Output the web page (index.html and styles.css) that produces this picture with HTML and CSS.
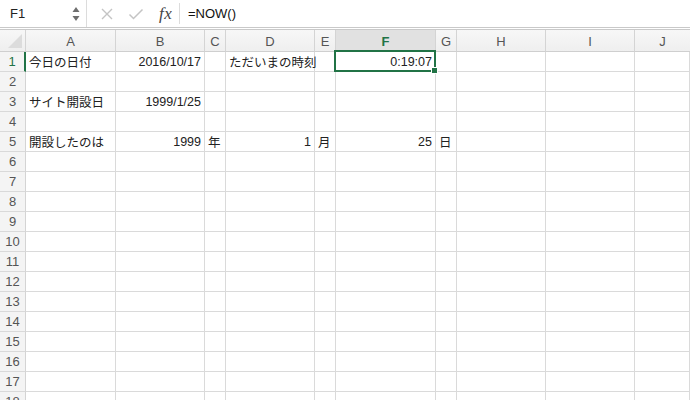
FILE: index.html
```html
<!DOCTYPE html>
<html lang="ja">
<head>
<meta charset="utf-8">
<link rel="stylesheet" href="styles.css">
</head>
<body>
<div class="app">
  <div class="fbar">
    <div class="namebox">
      <span class="name">F1</span>
      <svg class="spin" width="8" height="18" viewBox="0 0 8 18"><path d="M4 2 L7.5 7 L0.5 7 Z" fill="#6e6e6e"/><path d="M0.5 11 L7.5 11 L4 16 Z" fill="#6e6e6e"/></svg>
    </div>
    <div class="tools">
      <svg class="ico" width="14" height="14" viewBox="0 0 14 14"><path d="M2 2 L12 12 M12 2 L2 12" stroke="#c4c4c4" stroke-width="1.4" fill="none"/></svg>
      <svg class="ico" width="16" height="14" viewBox="0 0 16 14"><path d="M1.5 7.5 L5.5 11.5 L14.5 2.5" stroke="#c4c4c4" stroke-width="1.5" fill="none"/></svg>
      <span class="fx">fx</span>
    </div>
    <div class="formula">=NOW()</div>
  </div>
  <div class="sep"></div>
  <div class="sheet">
    <div class="corner"><svg width="14" height="14" viewBox="0 0 14 14"><path d="M14 0 L14 14 L0 14 Z" fill="#dcdcdc"/></svg></div>
    <div class="ch">A</div><div class="ch">B</div><div class="ch">C</div><div class="ch">D</div><div class="ch">E</div><div class="ch sel">F</div><div class="ch">G</div><div class="ch">H</div><div class="ch">I</div><div class="ch last">J</div>

    <div class="rh selr">1</div><div class="c">今日の日付</div><div class="c r">2016/10/17</div><div class="c"></div><div class="c">ただいまの時刻</div><div class="c"></div><div class="c r active">0:19:07</div><div class="c"></div><div class="c"></div><div class="c"></div><div class="c"></div>
    <div class="rh">2</div><div class="c"></div><div class="c"></div><div class="c"></div><div class="c"></div><div class="c"></div><div class="c"></div><div class="c"></div><div class="c"></div><div class="c"></div><div class="c"></div>
    <div class="rh">3</div><div class="c">サイト開設日</div><div class="c r">1999/1/25</div><div class="c"></div><div class="c"></div><div class="c"></div><div class="c"></div><div class="c"></div><div class="c"></div><div class="c"></div><div class="c"></div>
    <div class="rh">4</div><div class="c"></div><div class="c"></div><div class="c"></div><div class="c"></div><div class="c"></div><div class="c"></div><div class="c"></div><div class="c"></div><div class="c"></div><div class="c"></div>
    <div class="rh">5</div><div class="c">開設したのは</div><div class="c r">1999</div><div class="c">年</div><div class="c r">1</div><div class="c">月</div><div class="c r">25</div><div class="c">日</div><div class="c"></div><div class="c"></div><div class="c"></div>
    <div class="rh">6</div><div class="c"></div><div class="c"></div><div class="c"></div><div class="c"></div><div class="c"></div><div class="c"></div><div class="c"></div><div class="c"></div><div class="c"></div><div class="c"></div>
    <div class="rh">7</div><div class="c"></div><div class="c"></div><div class="c"></div><div class="c"></div><div class="c"></div><div class="c"></div><div class="c"></div><div class="c"></div><div class="c"></div><div class="c"></div>
    <div class="rh">8</div><div class="c"></div><div class="c"></div><div class="c"></div><div class="c"></div><div class="c"></div><div class="c"></div><div class="c"></div><div class="c"></div><div class="c"></div><div class="c"></div>
    <div class="rh">9</div><div class="c"></div><div class="c"></div><div class="c"></div><div class="c"></div><div class="c"></div><div class="c"></div><div class="c"></div><div class="c"></div><div class="c"></div><div class="c"></div>
    <div class="rh">10</div><div class="c"></div><div class="c"></div><div class="c"></div><div class="c"></div><div class="c"></div><div class="c"></div><div class="c"></div><div class="c"></div><div class="c"></div><div class="c"></div>
    <div class="rh">11</div><div class="c"></div><div class="c"></div><div class="c"></div><div class="c"></div><div class="c"></div><div class="c"></div><div class="c"></div><div class="c"></div><div class="c"></div><div class="c"></div>
    <div class="rh">12</div><div class="c"></div><div class="c"></div><div class="c"></div><div class="c"></div><div class="c"></div><div class="c"></div><div class="c"></div><div class="c"></div><div class="c"></div><div class="c"></div>
    <div class="rh">13</div><div class="c"></div><div class="c"></div><div class="c"></div><div class="c"></div><div class="c"></div><div class="c"></div><div class="c"></div><div class="c"></div><div class="c"></div><div class="c"></div>
    <div class="rh">14</div><div class="c"></div><div class="c"></div><div class="c"></div><div class="c"></div><div class="c"></div><div class="c"></div><div class="c"></div><div class="c"></div><div class="c"></div><div class="c"></div>
    <div class="rh">15</div><div class="c"></div><div class="c"></div><div class="c"></div><div class="c"></div><div class="c"></div><div class="c"></div><div class="c"></div><div class="c"></div><div class="c"></div><div class="c"></div>
    <div class="rh">16</div><div class="c"></div><div class="c"></div><div class="c"></div><div class="c"></div><div class="c"></div><div class="c"></div><div class="c"></div><div class="c"></div><div class="c"></div><div class="c"></div>
    <div class="rh">17</div><div class="c"></div><div class="c"></div><div class="c"></div><div class="c"></div><div class="c"></div><div class="c"></div><div class="c"></div><div class="c"></div><div class="c"></div><div class="c"></div>
    <div class="rh">18</div><div class="c"></div><div class="c"></div><div class="c"></div><div class="c"></div><div class="c"></div><div class="c"></div><div class="c"></div><div class="c"></div><div class="c"></div><div class="c"></div>
  </div>
</div>
</body>
</html>
```

FILE: styles.css
```css
* { box-sizing: border-box; }
html, body { margin: 0; padding: 0; background: #fff; overflow: hidden; }
body {
  font-family: "Liberation Sans", "Noto Sans CJK JP", sans-serif;
  font-size: 12.5px;
  color: #222;
  width: 690px;
  height: 400px;
}
.app { display: flex; flex-direction: column; }
.fbar {
  height: 28px;
  border-bottom: 1px solid #c9c9c9;
  display: flex;
  align-items: stretch;
}
.namebox {
  width: 87px;
  border-right: 1px solid #dcdcdc;
  display: flex;
  align-items: center;
  justify-content: space-between;
  padding: 0 6px 0 10px;
}
.name { font-size: 13px; color: #222; }
.spin { display: block; margin-top: 1px; }
.tools {
  display: flex;
  align-items: center;
  padding-left: 13px;
  width: 93px;
  border-right: 1px solid #dcdcdc;
  margin: 3px 0;
}
.tools .ico { display: block; margin-right: 14px; }
.tools .ico + .ico { margin-right: 15px; }
.fx {
  font-family: "Liberation Serif", serif;
  font-style: italic;
  font-size: 17px;
  color: #444;
  letter-spacing: 0.5px;
}
.formula {
  display: flex;
  align-items: center;
  padding-left: 8px;
  font-size: 13px;
  color: #111;
}
.sep { height: 2px; border-bottom: 1px solid #c9c9c9; }
.sheet {
  display: grid;
  grid-template-columns: 26px 90px 89px 21px 89px 21px 100px 21px 89px 89px 1fr;
  grid-auto-rows: 20px;
  grid-template-rows: 22px;
}
.corner, .ch {
  background: linear-gradient(#f7f7f7, #efefef);
  border-right: 1px solid #d4d4d4;
  border-bottom: 1px solid #cfcfcf;
}
.corner { display: flex; align-items: flex-end; justify-content: flex-end; padding: 0 3px 3px 0; }
.corner svg { display: block; }
.ch {
  display: flex; align-items: center; justify-content: center;
  color: #555; font-size: 13px; padding-top: 1px;
}
.ch.last { border-right: none; }
.ch.sel { background: #e1e1e1; color: #217346; font-weight: bold; }
.rh {
  background: #f4f4f4;
  border-right: 1px solid #d4d4d4;
  border-bottom: 1px solid #d9d9d9;
  display: flex; align-items: center; justify-content: center;
  color: #555; font-size: 13px;
}
.rh.selr { color: #217346; border-right: 2px solid #217346; }
.c {
  border-right: 1px solid #dadada;
  border-bottom: 1px solid #dadada;
  display: flex; align-items: center;
  padding: 0 3px;
  white-space: nowrap;
  color: #222;
}
.c.r { justify-content: flex-end; }
.active { position: relative; }
.active::after {
  content: "";
  position: absolute;
  left: -2px; top: -2px; right: -1px; bottom: -1px;
  border: 2px solid #217346;
}
.active::before {
  content: "";
  position: absolute;
  right: -3px; bottom: -3px;
  width: 5px; height: 5px;
  background: #217346;
  border: 1px solid #fff;
  z-index: 2;
}
```
